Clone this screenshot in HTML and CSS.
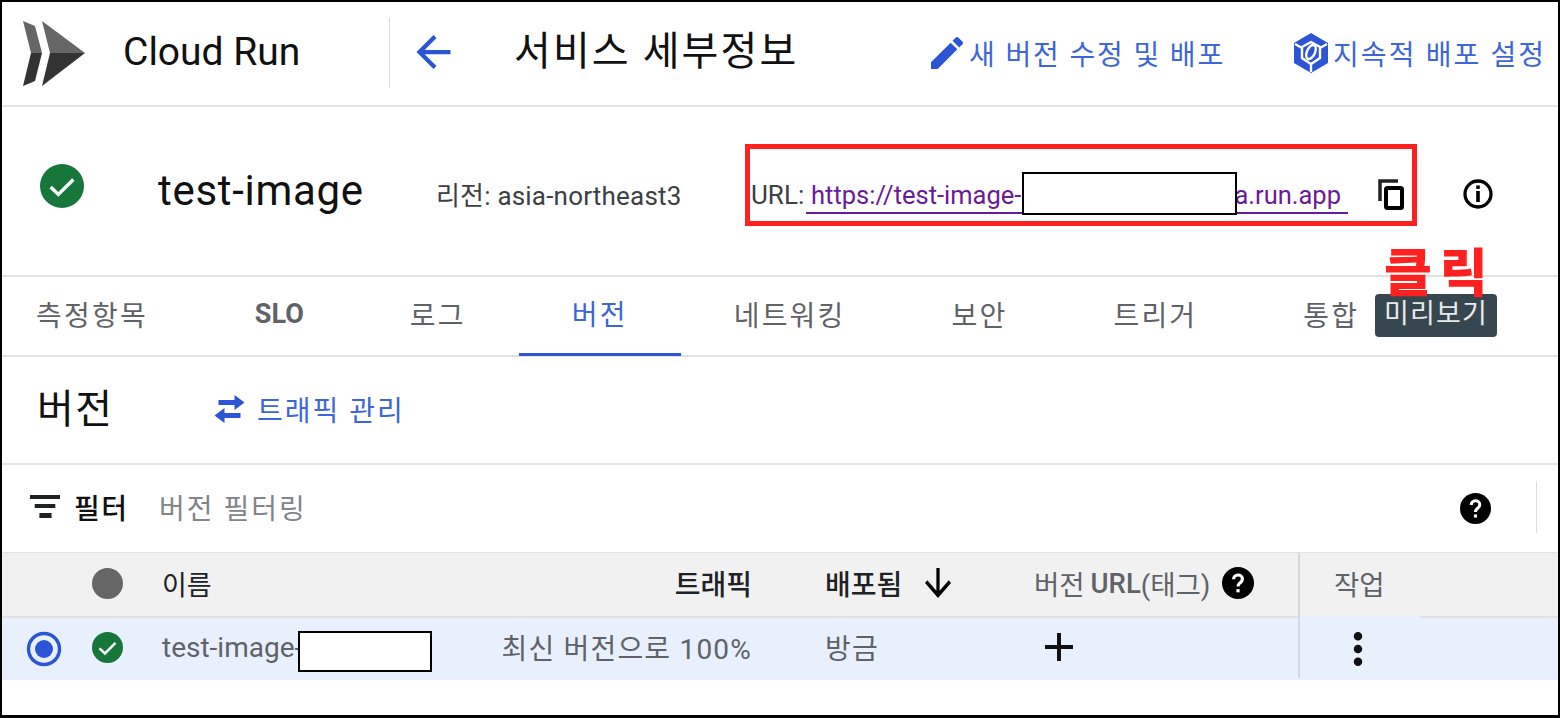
FILE: index.html
```html
<!DOCTYPE html>
<html lang="ko">
<head>
<meta charset="utf-8">
<title>Cloud Run</title>
<link rel="stylesheet" href="styles.css">
</head>
<body>
<div class="frame">
  <header class="topbar">
    <svg class="logo" viewBox="0 0 64 66"><polygon points="1,0 13,5 20,32 9,32" fill="#666"/><polygon points="9,32 20,32 13,60 1,65" fill="#333"/><polygon points="20,0 63,32 28,32" fill="#666"/><polygon points="28,32 63,32 20,65" fill="#333"/></svg>
    <div class="product">Cloud Run</div>
    <div class="vdiv"></div>
    <svg class="back" viewBox="4 4 16 16"><path d="M20 11H7.83l5.59-5.59L12 4l-8 8 8 8 1.41-1.41L7.83 13H20v-2z"/></svg>
    <h1 class="page-title">서비스 세부정보</h1>
    <a class="action action-edit"><svg class="pencil" viewBox="3 3 18 18"><path d="M3 17.25V21h3.75L17.81 9.94l-3.75-3.75L3 17.25zM20.71 7.04c.39-.39.39-1.02 0-1.41l-2.34-2.34c-.39-.39-1.02-.39-1.41 0l-1.83 1.83 3.75 3.75 1.83-1.83z"/></svg>새 버전 수정 및 배포</a>
    <a class="action action-cd"><svg class="hex" viewBox="0 0 36 40"><path d="M18 0l17 10v20L18 40 1 30V10z"/><g fill="none" stroke="#fff" stroke-width="2.4"><path d="M2 11l7 4M34 11l-7 4M18 31v8"/><path d="M9 14l9-5 9 5v11l-9 6-9-6z"/><ellipse cx="18" cy="19" rx="4" ry="7.5" transform="rotate(25 18 19)"/></g></svg>지속적 배포 설정</a>
  </header>

  <section class="summary">
    <svg class="status-big" viewBox="0 0 24 24"><circle cx="12" cy="12" r="12"/><path class="tick" d="M5.8 12.6l4.2 4 8.2-8.2"/></svg>
    <div class="service-name">test-image</div>
    <div class="region">리전: asia-northeast3</div>
    <div class="url-label">URL:</div>
    <a class="url-link"><span>https://test-image-</span><span>a.run.app</span></a>
    <svg class="copy" viewBox="0 0 28 33"><path class="copy-back" d="M3 23V3h18"/><rect class="copy-front" x="9" y="10" width="16" height="20" rx="1.5"/></svg>
    <svg class="info" viewBox="0 0 30 30"><circle class="info-ring" cx="15" cy="15" r="13"/><rect x="13.2" y="12" width="3.6" height="11"/><rect x="13.2" y="6.5" width="3.6" height="3.4"/></svg>
  </section>

  <nav class="tabs">
    <div class="tab tab-first">측정항목</div>
    <div class="tab tab-bold">SLO</div>
    <div class="tab">로그</div>
    <div class="tab tab-active">버전</div>
    <div class="tab">네트워킹</div>
    <div class="tab">보안</div>
    <div class="tab">트리거</div>
    <div class="tab">통합</div>
  </nav>

  <section class="versions-head">
    <h2 class="versions-title">버전</h2>
    <a class="traffic"><svg class="swap" viewBox="0 0 30 28"><path d="M4 5h16V0l10 7.5L20 15v-5H4z"/><path d="M26 18H10v-5L0 20.5 10 28v-5h16z"/></svg>트래픽 관리</a>
  </section>

  <section class="filter">
    <svg class="filter-icon" viewBox="0 0 32 23" preserveAspectRatio="none"><rect width="32" height="4"/><rect x="5" y="9" width="22" height="4"/><rect x="10" y="18" width="13" height="5"/></svg>
    <span class="filter-label">필터</span>
    <span class="filter-ph">버전 필터링</span>
    <svg class="help help-filter" viewBox="0 0 24 24"><circle cx="12" cy="12" r="12"/><path class="q" d="M8.7 9.2c0-2 1.5-3.2 3.3-3.2s3.3 1.2 3.3 3-1.2 2.4-2 3.1c-.8.7-1.3 1.2-1.3 2.6"/><rect class="q-dot" x="10.8" y="16.6" width="2.4" height="2.4"/></svg>
    <div class="filter-div"></div>
  </section>

  <div class="table">
    <div class="row row-head">
      <div class="cell"></div>
      <div class="cell cell-center"><span class="dot"></span></div>
      <div class="cell cell-name th-dark">이름</div>
      <div class="cell cell-right th-dark th-bold">트래픽</div>
      <div class="cell cell-deploy th-dark th-bold">배포됨<svg class="down" viewBox="4 4 16 16" preserveAspectRatio="none"><path d="M20 12l-1.41-1.41L13 16.17V4h-2v12.17l-5.58-5.59L4 12l8 8 8-8z"/></svg></div>
      <div class="cell th-url">버전 <b class="th-url-b">URL</b>(태그)<svg class="help help-th" viewBox="0 0 24 24"><circle cx="12" cy="12" r="12"/><path class="q" d="M8.7 9.2c0-2 1.5-3.2 3.3-3.2s3.3 1.2 3.3 3-1.2 2.4-2 3.1c-.8.7-1.3 1.2-1.3 2.6"/><rect class="q-dot" x="10.8" y="16.6" width="2.4" height="2.4"/></svg></div>
      <div class="cell cell-actions">작업</div>
      <div class="cell"></div>
    </div>
    <div class="row row-body">
      <div class="cell cell-center cell-select"><svg class="radio" viewBox="0 0 36 36"><circle cx="18" cy="18" r="15.5" fill="none" stroke="#2b55d4" stroke-width="3.4"/><circle cx="18" cy="18" r="9" fill="#2b55d4"/></svg></div>
      <div class="cell cell-center cell-up"><svg class="status-small" viewBox="0 0 24 24"><circle cx="12" cy="12" r="12"/><path class="tick" d="M5.8 12.6l4.2 4 8.2-8.2"/></svg></div>
      <div class="cell cell-name td-up td-name">test-image-</div>
      <div class="cell cell-right td-up td-traffic">최신 버전으로 100%</div>
      <div class="cell cell-deploy td-up td-traffic">방금</div>
      <div class="cell cell-add"><svg class="add" viewBox="5 5 14 14"><path d="M19 13h-6v6h-2v-6H5v-2h6V5h2v6h6v2z"/></svg></div>
      <div class="cell cell-actions cell-more"><svg class="more" viewBox="10 4 4 16"><path d="M12 8c1.1 0 2-.9 2-2s-.9-2-2-2-2 .9-2 2 .9 2 2 2zm0 2c-1.1 0-2 .9-2 2s.9 2 2 2 2-.9 2-2-.9-2-2-2zm0 6c-1.1 0-2 .9-2 2s.9 2 2 2 2-.9 2-2-.9-2-2-2z"/></svg></div>
      <div class="cell"></div>
    </div>
  </div>

  <div class="redact redact-url"></div>
  <div class="redact redact-name"></div>
  <div class="callout-box"></div>
  <div class="tooltip">미리보기</div>
  <div class="callout-text">클릭</div>
</div>
</body>
</html>
```

FILE: styles.css
```css
* { box-sizing: border-box; }
html, body { margin: 0; padding: 0; background: #fff; }
body { font-family: Roboto, "Noto Sans CJK KR", sans-serif; color: #202124; }
.frame { position: relative; width: 1560px; height: 718px; border: 2px solid #000; border-bottom-width: 3px; overflow: hidden; }
svg { display: block; flex: none; }
a { text-decoration: none; }

.topbar { display: flex; align-items: center; height: 105px; border-bottom: 2px solid #e2e2e2; padding-left: 20px; }
.logo { width: 64px; height: 66px; }
.product { font-size: 39px; margin: -4px 0 0 37px; width: 266px; color: #111; }
.vdiv { width: 1px; height: 70px; background: #dcdcdc; margin: -2px 25px 0 0; }
.back { width: 37px; height: 34px; fill: #2b55d4; margin: -3px 62px 0 0; }
.page-title { font-size: 40px; font-weight: 400; margin: -12px 0 0; width: 417px; letter-spacing: 2.1px; color: #111; white-space: nowrap; }
.action { display: flex; align-items: center; color: #3d66d8; font-size: 28px; letter-spacing: 1.85px; white-space: nowrap; padding-bottom: 1px; }
.pencil { width: 32px; height: 32px; fill: #2b55d4; margin-right: 6px; }
.action-edit { width: 362px; }
.action-cd { letter-spacing: 2.1px; }
.hex { width: 36px; height: 40px; fill: #2b55d4; margin-right: 4px; }

.summary { position: relative; display: flex; align-items: center; height: 170px; border-bottom: 2px solid #e2e2e2; }
.status-big { width: 44px; height: 44px; fill: #17763a; margin-left: 38px; margin-top: -10px; }
.tick { fill: none; stroke: #fff; stroke-width: 1.9; }
.service-name { font-size: 42px; letter-spacing: 0.7px; margin-left: 74px; width: 278px; color: #111; margin-top: -2px; }
.region { font-size: 26px; letter-spacing: 0.2px; width: 315px; color: #3c4043; margin-top: 5px; white-space: nowrap; }
.url-label { font-size: 26px; width: 60px; color: #3c4043; margin-top: 8px; }
.url-link { display: flex; justify-content: space-between; font-size: 25.5px; color: #6a1b9a; width: 542px; margin-left: -5px; padding: 0 7px 0 5px; border-bottom: 2px solid #6a1b9a; margin-top: 11px; white-space: nowrap; line-height: 33px; }
.copy { width: 28px; height: 33px; margin-left: 29px; margin-top: 7px; }
.copy-back { fill: none; stroke: #222; stroke-width: 3.5; }
.copy-front { fill: none; stroke: #000; stroke-width: 4; }
.info { width: 32px; height: 30px; margin-left: 57px; margin-top: 6px; }
.info-ring { fill: none; stroke: #000; stroke-width: 3.3; }

.tabs { display: flex; height: 80px; border-bottom: 2px solid #e2e2e2; }
.tab { display: flex; align-items: center; padding: 0 53px 4px; font-size: 28px; color: #5f6368; letter-spacing: 2.2px; white-space: nowrap; }
.tab-first { padding-left: 34px; padding-right: 54px; }
.tab-bold { font-size: 27px; font-weight: 700; letter-spacing: 0; }
.tab-active { color: #3d66d8; border-bottom: 3px solid #2b55d4; margin-bottom: -1px; }

.versions-head { display: flex; align-items: center; height: 108px; border-bottom: 2px solid #e2e2e2; }
.versions-title { font-size: 40px; font-weight: 400; letter-spacing: 1.5px; margin: -8px 0 0 35px; width: 177px; color: #111; }
.traffic { display: flex; align-items: center; color: #3d66d8; font-size: 28px; letter-spacing: 2px; padding-bottom: 2px; }
.swap { width: 31px; height: 28px; fill: #2b55d4; margin-right: 12px; }

.filter { display: flex; align-items: center; height: 89px; border-bottom: 2px solid #e2e2e2; padding-bottom: 4px; }
.filter-icon { width: 30px; height: 23px; fill: #202124; margin-left: 28px; }
.filter-label { font-size: 28px; font-weight: 500; letter-spacing: 1.5px; margin-left: 14px; width: 85px; color: #111; }
.filter-ph { font-size: 28px; color: #80868b; letter-spacing: 2px; white-space: nowrap; }
.help { fill: #000; }
.q { fill: none; stroke: #fff; stroke-width: 2.4; }
.q-dot { fill: #fff; }
.help-filter { position: absolute; left: 1458px; width: 31px; height: 31px; margin-top: 4px; }
.filter-div { position: absolute; left: 1534px; width: 1px; height: 52px; background: #dcdcdc; }

.row { display: grid; grid-template-columns: 75px 60px 363px 252px 282px 264px 122px 1fr; align-items: stretch; }
.row-head { height: 65px; background: #f1f1f1; border-bottom: 2px solid #e0e0e0; margin-top: -1px; }
.row-head > .cell { padding-bottom: 3px; }
.row-body { height: 62px; background: #e8f0fd; }
.cell { display: flex; align-items: center; font-size: 27px; min-width: 0; white-space: nowrap; }
.cell-center { justify-content: center; }
.cell-select { padding-left: 8px; }
.cell-up { padding-bottom: 4px; }
.cell-name { padding-left: 25px; }
.cell-right { justify-content: flex-end; }
.cell-deploy { padding-left: 73px; }
.th-dark { color: #202124; }
.th-bold { font-size: 28px; font-weight: 500; }
.th-url { color: #5f6368; font-size: 27.5px; }
.th-url-b { font-weight: 500; margin: 0 0 0 6px; }
.td-up { color: #5f6368; padding-bottom: 4px; }
.td-name { font-size: 28px; }
.td-traffic { font-size: 28px; letter-spacing: 1.2px; }
.dot { width: 31px; height: 31px; border-radius: 50%; background: #666; }
.down { width: 26px; height: 30px; margin-left: 23px; }
.help-th { width: 32px; height: 32px; margin-left: 12px; }
.cell-actions { border-left: 2px solid #d5d8de; padding-left: 34px; color: #5f6368; font-size: 27.5px; }
.cell-more { padding-left: 52px; padding-top: 3px; margin-top: -2px; margin-bottom: 2px; background: #e8f0fd; }
.radio { width: 36px; height: 36px; }
.status-small { width: 31px; height: 31px; fill: #17763a; }
.cell-add { padding-left: 11px; padding-bottom: 4px; }
.add { width: 28px; height: 28px; fill: #111; }
.more { width: 12px; height: 34px; fill: #111; }

.redact { position: absolute; background: #fff; border: 2px solid #000; }
.redact-url { left: 1020px; top: 170px; width: 215px; height: 43px; }
.redact-name { left: 296px; top: 629px; width: 134px; height: 41px; }
.callout-box { position: absolute; left: 743px; top: 142px; width: 672px; height: 82px; border: 5px solid #ff2020; }
.tooltip { position: absolute; left: 1373px; top: 292px; width: 122px; height: 43px; background: #37474f; color: #e8eaed; border-radius: 4px; font-size: 27px; display: flex; align-items: center; justify-content: center; padding-bottom: 8px; letter-spacing: 1.2px; white-space: nowrap; }
.callout-text { position: absolute; left: 1382px; top: 230px; font-size: 52px; font-weight: 900; color: #ff2020; letter-spacing: 8px; white-space: nowrap; }
```
